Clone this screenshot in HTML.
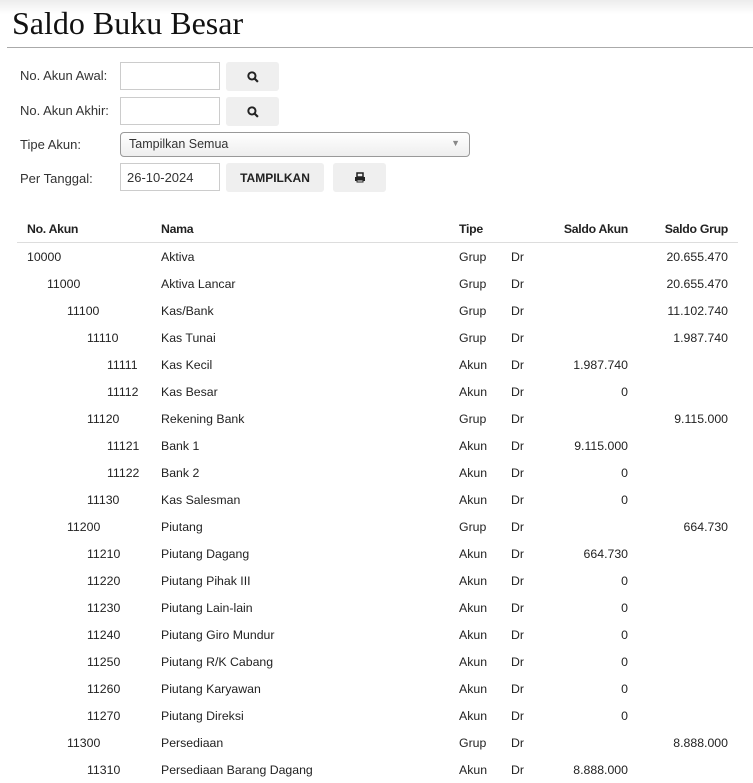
<!DOCTYPE html>
<html><head><meta charset="utf-8"><style>
body{margin:0;width:753px;height:779px;overflow:hidden;background:#fff;font-family:"Liberation Sans",sans-serif;color:#222;position:relative}
.top{position:absolute;left:0;top:0;width:753px;height:14px;background:linear-gradient(#ececec,#fff)}
h1{position:absolute;left:12px;top:5px;margin:0;font-family:"Liberation Serif",serif;font-weight:normal;font-size:32px;color:#111}
.hr{position:absolute;left:7px;right:0;top:47px;border-top:1px solid #aaa}
.lbl{position:absolute;left:20px;font-size:13px;color:#333}
.in{position:absolute;left:120px;width:100px;height:28px;border:1px solid #ccc;box-sizing:border-box;font-size:13px;padding:6px;color:#333}
.btn{position:absolute;background:#efefef;border-radius:3px;height:29px;display:flex;align-items:center;justify-content:center;font-size:12px;font-weight:bold;color:#222}
.sel{position:absolute;left:120px;top:132px;width:350px;height:25px;box-sizing:border-box;border:1px solid #999;border-radius:4px;background:linear-gradient(#fff,#eee);font-size:12.5px;color:#333;padding:4px 8px}
.r{position:absolute;left:0;width:753px;height:27px;font-size:12.3px;color:#222}
.r span{position:absolute;top:7px;white-space:nowrap}
.h span{font-weight:bold;letter-spacing:-.3px}
.c2{left:161px}.c3{left:459px}.c4{left:511px}.c5{right:125px}.c6{right:25px}
</style></head><body>
<div class="top"></div>
<h1>Saldo Buku Besar</h1>
<div class="hr"></div>
<div class="lbl" style="top:68px">No. Akun Awal:</div>
<div class="in" style="top:62px"></div>
<div class="btn" style="left:226px;top:62px;width:53px"><svg width="12" height="12" viewBox="0 0 11 11"><circle cx="4.5" cy="4.5" r="3.3" fill="none" stroke="#222" stroke-width="1.8"/><path d="M7 7l3 3" stroke="#222" stroke-width="2"/></svg></div>
<div class="lbl" style="top:103px">No. Akun Akhir:</div>
<div class="in" style="top:97px"></div>
<div class="btn" style="left:226px;top:97px;width:53px"><svg width="12" height="12" viewBox="0 0 11 11"><circle cx="4.5" cy="4.5" r="3.3" fill="none" stroke="#222" stroke-width="1.8"/><path d="M7 7l3 3" stroke="#222" stroke-width="2"/></svg></div>
<div class="lbl" style="top:137px">Tipe Akun:</div>
<div class="sel">Tampilkan Semua<span style="position:absolute;right:9px;top:5px;font-size:9px;color:#888">▼</span></div>
<div class="lbl" style="top:171px">Per Tanggal:</div>
<div class="in" style="top:163px">26-10-2024</div>
<div class="btn" style="left:226px;top:163px;width:98px">TAMPILKAN</div>
<div class="btn" style="left:333px;top:163px;width:53px"><svg width="12" height="11" viewBox="0 0 12 11"><rect x="3" y="1" width="6" height="4" fill="none" stroke="#222" stroke-width="1.5"/><rect x="1" y="5" width="10" height="4" fill="#222"/><rect x="3" y="8" width="6" height="2" fill="#fff" stroke="#222" stroke-width="1"/></svg></div>
<div class="r h" style="top:215px"><span style="left:27px">No. Akun</span><span class="c2">Nama</span><span class="c3">Tipe</span><span class="c5">Saldo Akun</span><span class="c6">Saldo Grup</span></div>
<div style="position:absolute;left:17px;width:721px;top:242px;border-top:1px solid #ddd"></div>
<div id="rows"></div>
<script>
var d=[[0,"10000","Aktiva","Grup","","20.655.470"],[1,"11000","Aktiva Lancar","Grup","","20.655.470"],[2,"11100","Kas/Bank","Grup","","11.102.740"],[3,"11110","Kas Tunai","Grup","","1.987.740"],[4,"11111","Kas Kecil","Akun","1.987.740",""],[4,"11112","Kas Besar","Akun","0",""],[3,"11120","Rekening Bank","Grup","","9.115.000"],[4,"11121","Bank 1","Akun","9.115.000",""],[4,"11122","Bank 2","Akun","0",""],[3,"11130","Kas Salesman","Akun","0",""],[2,"11200","Piutang","Grup","","664.730"],[3,"11210","Piutang Dagang","Akun","664.730",""],[3,"11220","Piutang Pihak III","Akun","0",""],[3,"11230","Piutang Lain-lain","Akun","0",""],[3,"11240","Piutang Giro Mundur","Akun","0",""],[3,"11250","Piutang R/K Cabang","Akun","0",""],[3,"11260","Piutang Karyawan","Akun","0",""],[3,"11270","Piutang Direksi","Akun","0",""],[2,"11300","Persediaan","Grup","","8.888.000"],[3,"11310","Persediaan Barang Dagang","Akun","8.888.000",""]];
var h="";d.forEach(function(r,i){h+='<div class="r" style="top:'+(243+i*27)+'px"><span style="left:'+(27+r[0]*20)+'px">'+r[1]+'</span><span class="c2">'+r[2]+'</span><span class="c3">'+r[3]+'</span><span class="c4">Dr</span><span class="c5">'+r[4]+'</span><span class="c6">'+r[5]+'</span></div>'});
document.getElementById("rows").innerHTML=h;
</script>
</body></html>
